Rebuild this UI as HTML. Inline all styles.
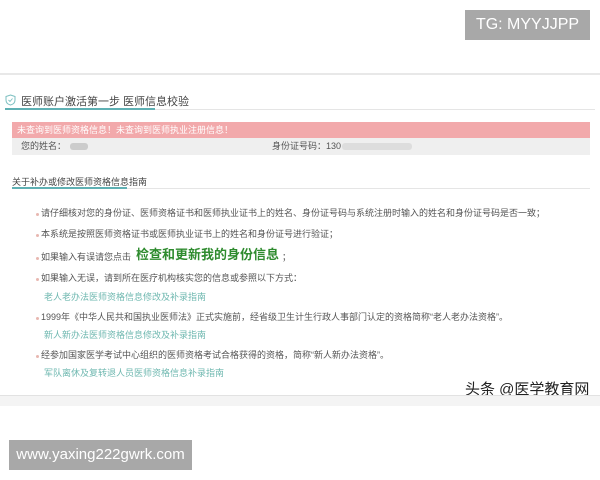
<!DOCTYPE html>
<html><head><meta charset="utf-8"><style>
*{margin:0;padding:0;box-sizing:border-box}
body{width:600px;height:480px;background:#fff;position:relative;overflow:hidden;font-family:"Liberation Sans","Noto Sans CJK SC",sans-serif;color:#555}
.a{position:absolute;white-space:nowrap}
.s{font-size:9px;color:#555;line-height:12px}
.l{font-size:9px;color:#6fb8b0;line-height:12px}
.d{position:absolute;width:3px;height:3px;border-radius:50%;background:#e8b7b0}
</style></head><body>
<div class="a" style="left:465px;top:10px;width:125px;height:30px;background:#a8a8a8;color:#fff;font-size:16px;line-height:30px;text-align:center">TG: MYYJJPP</div>
<div class="a" style="left:0;top:73px;width:600px;height:2px;background:#e8e8e8"></div>
<svg class="a" style="left:5px;top:94px" width="11" height="12" viewBox="0 0 11 12"><path d="M5.5 1 L10 2.5 V6 C10 9 7.5 10.5 5.5 11 C3.5 10.5 1 9 1 6 V2.5 Z" fill="none" stroke="#7bbfc0" stroke-width="1"/><path d="M3.5 6 L5 7.5 L7.5 4.5" fill="none" stroke="#7bbfc0" stroke-width="0.9"/></svg>
<div class="a" style="left:21px;top:93px;font-size:11px;color:#444">医师账户激活第一步 医师信息校验</div>
<div class="a" style="left:5px;top:108px;width:150px;height:2px;background:#5fb0b3"></div>
<div class="a" style="left:155px;top:109px;width:440px;height:1px;background:#e5e5e5"></div>
<div class="a" style="left:12px;top:122px;width:578px;height:16px;background:#f2a9ab;color:#fff;font-size:9px;line-height:16px;padding-left:5px">未查询到医师资格信息！未查询到医师执业注册信息！</div>
<div class="a" style="left:12px;top:138px;width:578px;height:17px;background:#efefef;font-size:9px;line-height:17px;color:#555"><span style="position:absolute;left:9px">您的姓名：</span><span style="position:absolute;left:58px;top:5px;width:18px;height:7px;background:#ccc;border-radius:3px"></span><span style="position:absolute;left:260px">身份证号码：130</span><span style="position:absolute;left:330px;top:5px;width:70px;height:7px;background:#ddd;border-radius:3px"></span></div>
<div class="a" style="left:12px;top:175px;font-size:9px;color:#444">关于补办或修改医师资格信息指南</div>
<div class="a" style="left:12px;top:187px;width:115px;height:2px;background:#5fb0b3"></div>
<div class="a" style="left:127px;top:188px;width:463px;height:1px;background:#e5e5e5"></div>
<div class="d" style="left:36px;top:213px"></div><div class="a s" style="left:41px;top:207px">请仔细核对您的身份证、医师资格证书和医师执业证书上的姓名、身份证号码与系统注册时输入的姓名和身份证号码是否一致；</div>
<div class="d" style="left:36px;top:234px"></div><div class="a s" style="left:41px;top:228px">本系统是按照医师资格证书或医师执业证书上的姓名和身份证号进行验证；</div>
<div class="d" style="left:36px;top:257px"></div><div class="a s" style="left:41px;top:251px">如果输入有误请您点击</div>
<div class="a" style="left:136px;top:246px;font-size:13px;line-height:18px;font-weight:bold;color:#2e8b2e">检查和更新我的身份信息</div>
<div class="a s" style="left:282px;top:251px">；</div>
<div class="d" style="left:36px;top:278px"></div><div class="a s" style="left:41px;top:272px">如果输入无误，请到所在医疗机构核实您的信息或参照以下方式：</div>
<div class="a l" style="left:44px;top:291px">老人老办法医师资格信息修改及补录指南</div>
<div class="d" style="left:36px;top:317px"></div><div class="a s" style="left:41px;top:311px">1999年《中华人民共和国执业医师法》正式实施前，经省级卫生计生行政人事部门认定的资格简称“老人老办法资格”。</div>
<div class="a l" style="left:44px;top:329px">新人新办法医师资格信息修改及补录指南</div>
<div class="d" style="left:36px;top:355px"></div><div class="a s" style="left:41px;top:349px">经参加国家医学考试中心组织的医师资格考试合格获得的资格，简称“新人新办法资格”。</div>
<div class="a l" style="left:44px;top:367px">军队离休及复转退人员医师资格信息补录指南</div>
<div class="a" style="left:465px;top:378px;font-size:15px;color:#222">头条 @医学教育网</div>
<div class="a" style="left:0;top:395px;width:600px;height:1px;background:#e2e2e2"></div>
<div class="a" style="left:0;top:396px;width:600px;height:10px;background:#f4f4f4"></div>
<div class="a" style="left:9px;top:440px;width:183px;height:30px;background:#a8a8a8;color:#fff;font-size:15px;line-height:30px;text-align:center">www.yaxing222gwrk.com</div>
</body></html>
